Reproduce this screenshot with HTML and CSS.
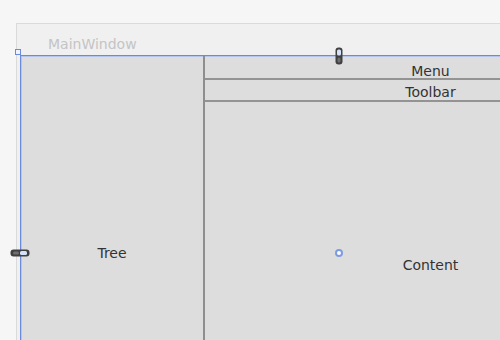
FILE: index.html
```html
<!DOCTYPE html>
<html lang="en">
<head>
  <meta charset="UTF-8">
  <meta name="viewport" content="width=device-width, initial-scale=1.0">
  <title>MainWindow Designer</title>
  <link rel="stylesheet" href="styles.css">
</head>
<body>
  <div class="designer">
    <div class="window">
      <div class="window-title">MainWindow</div>

      <div class="client">
        <!-- Left pane -->
        <div class="tree">Tree</div>

        <!-- Right column -->
        <div class="main">
          <div class="menu">Menu</div>
          <div class="toolbar">Toolbar</div>
          <div class="content">Content</div>
        </div>

        <!-- Designer adorners -->
        <span class="corner-handle"></span>
        <svg class="handle handle-top" width="8" height="18" viewBox="0 0 8 18">
          <rect x="0.5" y="0.5" width="7" height="17" rx="3" fill="#404040"/>
          <rect x="2" y="2.5" width="4" height="6" rx="1.5" fill="#d4e2fa"/>
          <rect x="2.5" y="10.5" width="3" height="5" rx="1.5" fill="#6e6e6e"/>
        </svg>
        <svg class="handle handle-left" width="20" height="8" viewBox="0 0 20 8">
          <rect x="0.5" y="0.5" width="19" height="7" rx="3" fill="#404040"/>
          <rect x="3" y="2.5" width="6" height="3" rx="1.5" fill="#6e6e6e"/>
          <rect x="10" y="2" width="7" height="4" rx="1.5" fill="#d4e2fa"/>
        </svg>
        <span class="center-dot"></span>
      </div>
    </div>
  </div>
</body>
</html>
```

FILE: styles.css
```css
html, body {
  margin: 0;
  padding: 0;
  overflow: hidden;
  background: #f6f6f6;
  font-family: 'DejaVu Sans', Verdana, sans-serif;
  font-size: 14px;
  color: #333333;
}
.designer {
  width: 500px;
  height: 340px;
  padding: 23px 0 0 16px;
  box-sizing: border-box;
  overflow: hidden;
}
.window {
  width: 636px;
  padding: 0 0 0 3px;
  background: #f0f0f0;
  border: 1px solid #dadada;
}
.window-title {
  height: 31px;
  box-sizing: border-box;
  padding: 12px 0 0 28px;
  line-height: 16px;
  color: #c4c4c4;
}
.client {
  position: relative;
  display: flex;
  height: 394px;
  border-top: 1px solid #6a8bdc;
  border-left: 1px solid #6a8bdc;
  background: #dddddd;
  box-shadow: inset 0 1px 0 #b4c6ee, inset 1px 0 0 #b4c6ee;
}
.tree {
  width: 182px;
  border-right: 2px solid #8e8e8e;
  display: flex;
  align-items: center;
  justify-content: center;
  line-height: 16px;
}
.main {
  flex: 1;
  display: flex;
  flex-direction: column;
}
.menu, .toolbar {
  text-align: center;
  line-height: 16px;
  box-sizing: border-box;
  border-bottom: 2px solid #939393;
}
.menu {
  height: 24px;
  padding-top: 7px;
}
.toolbar {
  height: 22px;
  padding-top: 4px;
}
.content {
  height: 325px;
  display: flex;
  align-items: center;
  justify-content: center;
  line-height: 16px;
}

/* adorners */
.corner-handle {
  position: absolute;
  left: -6px;
  top: -7px;
  width: 4px;
  height: 4px;
  border: 1px solid #6a8bdc;
  background: #eef3ff;
}
.handle {
  position: absolute;
  display: block;
}
.handle-top {
  left: 50%;
  top: -9px;
  margin-left: -4px;
}
.handle-left {
  left: -11px;
  top: 50%;
  margin-top: -4px;
}
.center-dot {
  position: absolute;
  left: 50%;
  top: 50%;
  width: 4px;
  height: 4px;
  margin: -4px 0 0 -4px;
  border: 2px solid #7c9be0;
  border-radius: 50%;
  background: #ffffff;
}
```
